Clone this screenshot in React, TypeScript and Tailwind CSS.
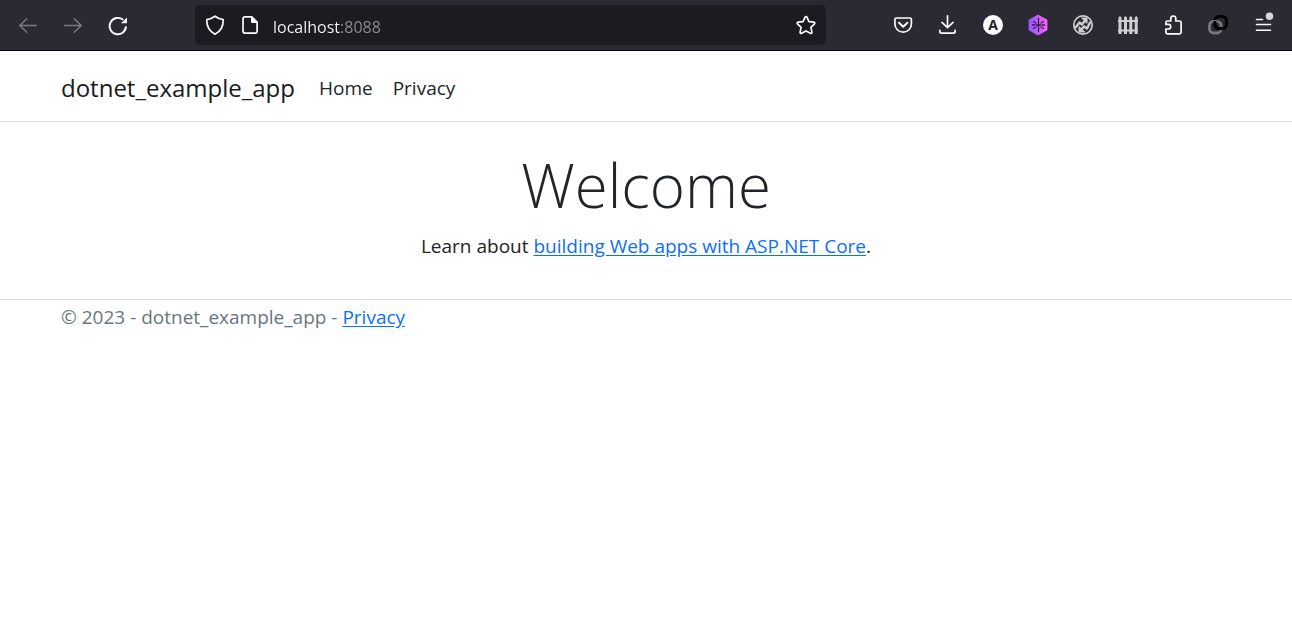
import type { ReactNode } from "react";

function Icon({ children }: { children: ReactNode }) {
  return (
    <svg
      viewBox="0 0 25 26"
      className="h-[26px] w-[25px] shrink-0"
      fill="none"
      stroke="currentColor"
      strokeWidth="1.9"
      strokeLinecap="round"
      strokeLinejoin="round"
      aria-hidden="true"
    >
      {children}
    </svg>
  );
}

function ToolButton({ label, disabled, children }: { label: string; disabled?: boolean; children: ReactNode }) {
  return (
    <button
      type="button"
      aria-label={label}
      disabled={disabled}
      className="flex h-[50px] w-[45px] shrink-0 items-center justify-center text-[#fbfbfe] disabled:text-[#7b7a80]"
    >
      <Icon>{children}</Icon>
    </button>
  );
}

function BrowserBar() {
  return (
    <div className="flex items-center border-b border-[#0c0c0d] bg-[#2b2a33] pr-[6px] pl-[5px]">
      <ToolButton label="Back" disabled>
        <path d="M21.3 13.5H4.7M11.8 6.8 4.7 13.5l7.1 6.8" strokeWidth="1.5" />
      </ToolButton>
      <ToolButton label="Forward" disabled>
        <path d="M4.7 13.5h16.6M14.2 6.8l7.1 6.7-7.1 6.8" strokeWidth="1.5" />
      </ToolButton>
      <ToolButton label="Reload">
        <path d="M21 14.4A8.2 8.2 0 1 1 18.2 7.9" strokeLinecap="butt" />
        <path d="M22 5.4V11.2h-6z" fill="currentColor" stroke="none" />
      </ToolButton>

      <div className="mx-[55px] flex h-[40px] min-w-0 flex-1 items-center gap-[10px] rounded-[5px] bg-[#1c1b22] px-2 text-[#fbfbfe]">
        <Icon>
          <path d="M12 4.200c2.600 1.900 5.200 2.900 8.200 3.500.2 6.300-2.400 11.400-8.200 14.600C6.200 19.100 3.600 14 3.800 7.700 6.800 7.100 9.400 6.100 12 4.200z" strokeWidth="1.7" />
        </Icon>
        <Icon>
          <path d="M7 4.900h6.800l5.300 5.300v8.900a2 2 0 0 1-2 2H7a2 2 0 0 1-2-2V6.900a2 2 0 0 1 2-2z" strokeWidth="1.7" />
          <path d="M13.500 5v5.500H19z" fill="currentColor" strokeWidth="1" />
        </Icon>
        <input
          type="text"
          aria-label="Address"
          defaultValue="localhost:8088"
          className="h-[40px] min-w-0 flex-1 bg-[linear-gradient(90deg,#fbfbfe_67px,#8f8f98_67px)] bg-clip-text pt-[3px] font-['Open_Sans',sans-serif] text-[16px] text-transparent caret-white outline-none"
        />
        <button type="button" aria-label="Bookmark this page">
          <Icon>
            <path d="M12.100 5.100c.4-.8 1.400-.8 1.800 0l2.100 4.500 4.900.6c.9.1 1.200 1.100.6 1.700l-3.600 3.400 1 4.900c.2.900-.7 1.500-1.500 1.100L13 18.900l-4.400 2.400c-.8.4-1.700-.2-1.500-1.100l1-4.900-3.600-3.400c-.6-.6-.3-1.600.6-1.700l4.900-.6z" strokeWidth="1.7" />
          </Icon>
        </button>
      </div>

      <ToolButton label="Save to Pocket">
        <path d="M5.500 6h13.300a1.600 1.600 0 0 1 1.600 1.600v4.300a8.250 8.250 0 0 1-16.500 0V7.600A1.600 1.600 0 0 1 5.500 6z" strokeWidth="1.7" />
        <path d="m8 10.800 4.200 4 4.200-4" strokeWidth="2" />
      </ToolButton>
      <ToolButton label="Downloads">
        <path d="M11.500 3.800v11.500M6 10.300l5.500 5.400 5.500-5.400" strokeWidth="1.7" />
        <path d="M3.900 18.300v1.300a1.600 1.600 0 0 0 1.600 1.600h12a1.600 1.600 0 0 0 1.600-1.600v-1.300" strokeWidth="1.8" />
      </ToolButton>
      <ToolButton label="Account">
        <circle cx="12" cy="13" r="10" fill="#fbfbfe" stroke="none" />
        <text
          x="12"
          y="18"
          textAnchor="middle"
          fill="#25242c"
          stroke="none"
          className="font-['Open_Sans',sans-serif] text-[14px] font-bold"
        >
          A
        </text>
      </ToolButton>
      <ToolButton label="Hexagon extension">
        <defs>
          <linearGradient id="hex" x1="0" y1="0" x2="1" y2="0">
            <stop offset="0" stopColor="#9059ff" />
            <stop offset="1" stopColor="#f564f5" />
          </linearGradient>
        </defs>
        <path d="m12 3.500 8.600 4.800v9.400L12 22.500l-8.600-4.800V8.300z" fill="url(#hex)" stroke="url(#hex)" strokeWidth="1.6" />
        <path
          d="M12.500 6.500v13M6.500 13h2.500M16 13h2.500M7.500 9.500l2.500 1.500M17.500 9.500 15 11M7.500 16.500 10 15M17.500 16.500 15 15M10.500 13h4"
          stroke="#33194f"
          strokeWidth="1.3"
        />
      </ToolButton>
      <ToolButton label="Sync extension">
        <g stroke="#cfcfd2">
          <circle cx="12" cy="13" r="9.200" strokeWidth="1.7" />
          <path d="m5 15 3.500-4.500 2.500 2L14.500 8" strokeWidth="2.4" />
          <path d="M11 6h5v5z" fill="#cfcfd2" strokeWidth="1" />
          <path d="m19 10.500-3 6-3-2-3.500 4" strokeWidth="2.4" />
          <path d="M8 15v5h5.500z" fill="#cfcfd2" strokeWidth="1" />
        </g>
      </ToolButton>
      <ToolButton label="Fence extension">
        <g fill="#cfcfd2" stroke="none">
          <path d="M2 8h20v2H2zM2 17.500h20v2H2z" />
          <path d="M2.500 5.500 4 4l1.500 1.500V22h-3zM8 5.500 9.500 4 11 5.500V22H8zM13.300 5.500 14.800 4l1.500 1.500V22h-3zM18.700 5.500 20.200 4l1.500 1.500V22h-3z" />
        </g>
      </ToolButton>
      <ToolButton label="Extensions">
        <path
          d="M6.500 9h3.300V6.500a2.500 2.500 0 0 1 5 0V9h3.700a1.600 1.600 0 0 1 1.600 1.600v9.700a1.600 1.600 0 0 1-1.600 1.600H6.500a1.600 1.600 0 0 1-1.600-1.600V17h2.500a2.300 2.300 0 0 0 0-4.600H4.900v-1.800A1.600 1.600 0 0 1 6.500 9z"
          strokeWidth="1.7"
        />
      </ToolButton>
      <ToolButton label="Chain extension">
        <rect x="8.900" y="4.500" width="11.500" height="12" rx="4" stroke="#000" strokeWidth="3" />
        <rect x="3.500" y="9.300" width="11.500" height="11.700" rx="4" stroke="#77767c" strokeWidth="2.8" />
        <path d="M8.900 9v3.500a4 4 0 0 0 4 4h3.500" stroke="#000" strokeWidth="3" strokeLinecap="butt" />
      </ToolButton>
      <ToolButton label="Open application menu">
        <path d="M5.500 7.500h6M5.500 12.500h14M5.500 18.300h14" strokeWidth="1.6" />
        <circle cx="18.500" cy="4.300" r="3.700" fill="#d7d7db" stroke="none" />
      </ToolButton>
    </div>
  );
}

export default function App() {
  return (
    <div className="min-h-screen bg-white font-['Open_Sans',sans-serif] text-[19px] leading-[30px] text-[#212529]">
      <BrowserBar />
      <header className="border-b border-[#dee2e6]">
        <nav className="flex h-[70px] items-center gap-6 px-[61px] pt-1">
          <a href="#home" className="text-[24px] text-[#181b1e]">
            dotnet_example_app
          </a>
          <div className="flex gap-5">
            <a href="#home">Home</a>
            <a href="#privacy">Privacy</a>
          </div>
        </nav>
      </header>
      <main className="px-[61px] pt-[25px] pb-[38px] text-center">
        <h1 className="mb-2 text-[60px] leading-[76px] font-light">Welcome</h1>
        <p>
          Learn about{" "}
          <a href="#learn" className="text-[#0d6efd] underline underline-offset-2">
            building Web apps with ASP.NET Core
          </a>
          .
        </p>
      </main>
      <footer className="border-t border-[#dee2e6] px-[61px] pt-[2px] text-[#6c757d]">
        © 2023 - dotnet_example_app -{" "}
        <a href="#privacy" className="text-[#0d6efd] underline underline-offset-2">
          Privacy
        </a>
      </footer>
    </div>
  );
}
